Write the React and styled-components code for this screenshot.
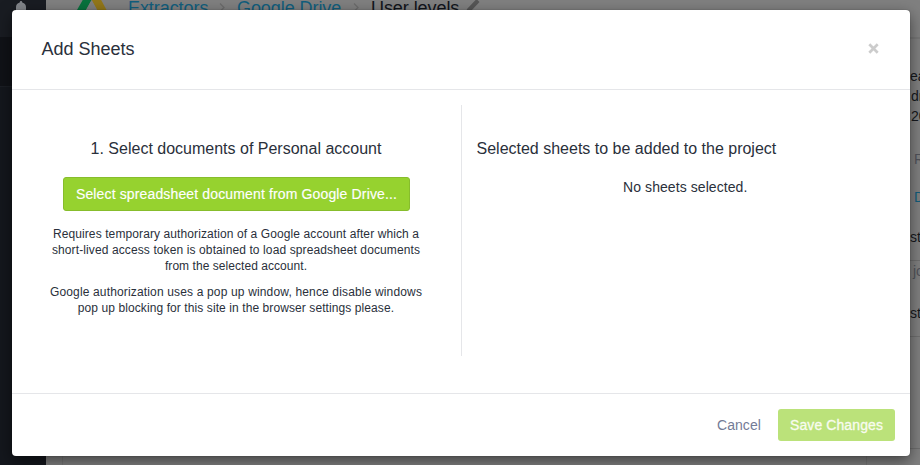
import React from "react";
import styled, { createGlobalStyle } from "styled-components";

const Global = createGlobalStyle`
  * { box-sizing: border-box; }
  body { margin: 0; overflow: hidden; background: #808080; font-family: "Liberation Sans", Arial, sans-serif; font-size: 14px; line-height: 20px; color: #2a303b; }
  h4, p { margin: 0; font-weight: 400; }
  button { font-family: inherit; }
`;

const Screen = styled.div`
  position: relative;
  width: 920px;
  height: 465px;
  overflow: hidden;
`;
const Page = styled.div`
  display: flex;
  height: 100%;
`;
const Sidebar = styled.aside`
  width: 46px;
  background: #14171d;
`;
const SidebarTop = styled.div`
  height: 37px;
  padding-left: 15px;
  background: #191c22;
  svg { display: block; }
`;
const SidebarSection = styled.div`
  height: 50px;
  background: #101217;
  border-bottom: 1px solid #1b1e24;
`;
const Main = styled.main`
  flex: 1;
  display: flex;
  flex-direction: column;
  overflow: hidden;
`;
const TopBar = styled.header`
  height: 39px;
  flex: none;
  display: flex;
  align-items: flex-start;
  padding-left: 31px;
  border-bottom: 2px solid #777;
  svg { flex: none; }
`;
const Crumb = styled.span`
  width: ${(p) => p.$width}px;
  margin-left: ${(p) => p.$gap || 0}px;
  margin-top: -3px;
  font-size: 18px;
  line-height: 22px;
  white-space: nowrap;
  letter-spacing: -0.07px;
  color: ${(p) => (p.$current ? "#11141b" : "#115e7d")};
`;
const Content = styled.div`
  flex: 1;
  display: grid;
  grid-template-columns: 804px 1fr;
  margin-left: 16px;
  border-left: 1px solid #767676;
`;
const Details = styled.div`
  border-right: 1px solid #767676;
`;
const Side = styled.div`
  height: 410px;
  padding-top: 27px;
  padding-left: 43px;
  margin-right: -40px;
  border-bottom: 1px solid #6f6f6f;
`;
const SideText = styled.div`
  height: ${(p) => p.$height}px;
  padding-left: ${(p) => p.$indent || 0}px;
  color: ${(p) => p.$color || "#15181d"};
  white-space: nowrap;
  border-bottom: ${(p) => (p.$line ? "1px solid #6f6f6f" : "0")};
`;
const Dialog = styled.section`
  position: absolute;
  left: 12px;
  top: 10px;
  width: 898px;
  height: 446px;
  display: flex;
  flex-direction: column;
  border-radius: 4px;
  background: #fff;
  box-shadow: 0 0 1px rgba(0, 0, 0, 0.5), 0 5px 15px rgba(0, 0, 0, 0.5);
`;
const DialogHeader = styled.header`
  height: 80px;
  display: flex;
  align-items: center;
  justify-content: space-between;
  padding: 0 31px 2px 29.5px;
  border-bottom: 1px solid #e5e6e9;
`;
const DialogTitle = styled.h4`
  padding-top: 2px;
  font-size: 18px;
  line-height: 27px;
`;
const CloseButton = styled.button`
  display: flex;
  padding: 0;
  border: 0;
  background: transparent;
`;
const DialogBody = styled.div`
  flex: 1;
  display: grid;
  grid-template-columns: 450px 1fr;
  padding: 15px 0 37px;
`;
const PickColumn = styled.div`
  display: flex;
  flex-direction: column;
  align-items: center;
  padding: 33px 1px 0 0;
  border-right: 1px solid #e5e6e9;
  text-align: center;
`;
const SelectedColumn = styled.div`
  padding: 33px 29px 0 14.5px;
`;
const Heading = styled.h4`
  font-size: 16px;
  line-height: 22px;
  white-space: nowrap;
`;
const PickButton = styled.button`
  width: 347px;
  height: 34px;
  margin: 17px 0 15px;
  padding: 0 0 0 1px;
  border: 1px solid #87bd2c;
  border-radius: 3px;
  background: #96d22f;
  color: #fff;
  font-size: 14px;
  line-height: 20px;
  letter-spacing: 0.14px;
  -webkit-text-stroke: 0.15px #fff;
`;
const Help = styled.p`
  margin-bottom: 10px;
  font-size: 12px;
  line-height: 16px;
  white-space: nowrap;
`;
const HelpLine = styled.span`
  display: block;
  letter-spacing: ${(p) => p.$tracking || 0}px;
`;
const Empty = styled.p`
  margin-top: 17px;
  padding-left: 13px;
  letter-spacing: 0.07px;
  text-align: center;
`;
const DialogFooter = styled.footer`
  height: 63px;
  display: flex;
  justify-content: flex-end;
  align-items: center;
  gap: 17px;
  padding-right: 15px;
  border-top: 1px solid #e5e6e9;
`;
const CancelButton = styled.button`
  padding: 0;
  border: 0;
  background: transparent;
  color: #737b96;
  font-size: 14px;
  line-height: 20px;
  letter-spacing: 0.08px;
`;
const SaveButton = styled.button`
  width: 117px;
  height: 32px;
  padding: 0;
  border: 0;
  border-radius: 3px;
  background: #bbe27a;
  color: #f8fcef;
  font-size: 14px;
  line-height: 20px;
  letter-spacing: 0.1px;
  -webkit-text-stroke: 0.3px #f8fcef;
`;

const BellIcon = () => (
  <svg width="12" height="17" viewBox="0 0 12 17">
    <path d="M1 17V7C1 4.6 2.3 3.3 4.5 2.7C4.8 1.5 5.2 1 6 1S7.2 1.5 7.5 2.7C9.7 3.3 11 4.6 11 7V17Z" fill="#82858a" />
  </svg>
);
const DriveIcon = () => (
  <svg width="32" height="27" viewBox="0 0 32 27">
    <path d="M8 -4L15 -0.5L1 25L-4 17Z" fill="#08723d" />
    <path d="M12.5 -4H22L35 20H25.5Z" fill="#927719" />
    <path d="M8 17H35L29 26H2Z" fill="#244477" />
    <path d="M14.5 0L24 17H5Z" fill="#808080" />
  </svg>
);
const Chevron = () => (
  <svg width="30" height="16" viewBox="0 0 30 16">
    <path d="M13 3.5L17 7.5L13 11.5" fill="none" stroke="#6c6c6c" strokeWidth="1.3" />
  </svg>
);
const PencilIcon = () => (
  <svg width="24" height="16" viewBox="0 0 24 16">
    <path d="M18.5 -1L21.5 2L12 12L8 13L9 9Z" fill="#565656" />
  </svg>
);
const CloseIcon = () => (
  <svg width="11" height="11" viewBox="0 0 11 11">
    <path d="M1.3 1.3L9.7 9.7M9.7 1.3L1.3 9.7" stroke="#ccc" strokeWidth="2.7" />
  </svg>
);

const sideRows = [
  { text: "eated", height: 20 },
  { text: "drive", height: 20, indent: 1 },
  { text: "2016", height: 43, indent: 1 },
  { text: "Run", height: 38, indent: 4, color: "#51535b" },
  { text: "Disable", height: 40, indent: 4, color: "#125d7c" },
  { text: "st", height: 34, line: true },
  { text: "job", height: 42, indent: 3, color: "#51535b" },
  { text: "st", height: 34, line: true },
];

export default function App() {
  return (
    <Screen>
      <Global />
      <Page>
        <Sidebar>
          <SidebarTop><BellIcon /></SidebarTop>
          <SidebarSection />
        </Sidebar>
        <Main>
          <TopBar>
            <DriveIcon />
            <Crumb $gap={19} $width={79}>Extractors</Crumb>
            <Chevron />
            <Crumb $width={104}>Google Drive</Crumb>
            <Chevron />
            <Crumb $width={87} $current>User levels</Crumb>
            <PencilIcon />
          </TopBar>
          <Content>
            <Details />
            <Side>
              {sideRows.map((row, i) => (
                <SideText key={i} $height={row.height} $indent={row.indent} $color={row.color} $line={row.line}>
                  {row.text}
                </SideText>
              ))}
            </Side>
          </Content>
        </Main>
      </Page>
      <Dialog>
        <DialogHeader>
          <DialogTitle>Add Sheets</DialogTitle>
          <CloseButton aria-label="Close"><CloseIcon /></CloseButton>
        </DialogHeader>
        <DialogBody>
          <PickColumn>
            <Heading>1. Select documents of Personal account</Heading>
            <PickButton>Select spreadsheet document from Google Drive...</PickButton>
            <Help>
              <HelpLine $tracking={0.1}>Requires temporary authorization of a Google account after which a</HelpLine>
              <HelpLine $tracking={0.11}>short-lived access token is obtained to load spreadsheet documents</HelpLine>
              <HelpLine $tracking={0.05}>from the selected account.</HelpLine>
            </Help>
            <Help>
              <HelpLine $tracking={0.155}>Google authorization uses a pop up window, hence disable windows</HelpLine>
              <HelpLine $tracking={0.09}>pop up blocking for this site in the browser settings please.</HelpLine>
            </Help>
          </PickColumn>
          <SelectedColumn>
            <Heading>Selected sheets to be added to the project</Heading>
            <Empty>No sheets selected.</Empty>
          </SelectedColumn>
        </DialogBody>
        <DialogFooter>
          <CancelButton>Cancel</CancelButton>
          <SaveButton>Save Changes</SaveButton>
        </DialogFooter>
      </Dialog>
    </Screen>
  );
}
